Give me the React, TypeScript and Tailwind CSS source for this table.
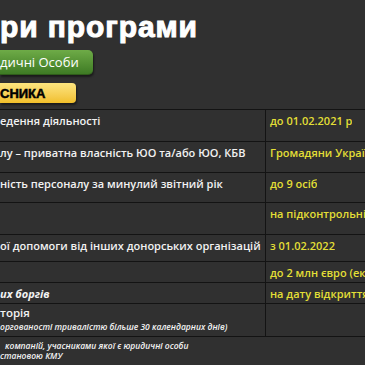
type Row = {
  h: string;
  left?: string;
  right?: string;
  italicLeft?: boolean;
};

const ROWS: Row[] = [
  { h: "h-[32px]", left: "едення діяльності", right: "до 01.02.2021 р" },
  { h: "h-[31px]", left: "лу – приватна власність ЮО та/або ЮО, КБВ", right: "Громадяни України" },
  { h: "h-[30px]", left: "ність персоналу за минулий звітний рік", right: "до 9 осіб" },
  { h: "h-[32px]", right: "на підконтрольній території" },
  { h: "h-[27px]", left: "ої допомоги від інших донорських організацій", right: "з 01.02.2022" },
  { h: "h-[21px]", right: "до 2 млн євро (еквівалент)" },
  { h: "h-[21px]", left: "их боргів", right: "на дату відкриття", italicLeft: true },
];

export default function App() {
  return (
    <div className="h-[365px] w-[365px] overflow-hidden bg-[#303030] font-['Open_Sans',sans-serif]">
      <h1 className="mt-[10px] whitespace-nowrap font-['Liberation_Sans',Arial,sans-serif] text-[30px] font-bold leading-[34px] tracking-[0.9px] text-white [-webkit-text-stroke:1px_white]">
        ри програми
      </h1>

      <div className="mt-[6px] flex h-[25px] w-[93px] items-center rounded-r-[5px] border-b border-[#2f5c1a] bg-gradient-to-b from-[#6eab47] to-[#3e7b24] shadow-[1px_2px_2px_rgba(0,0,0,0.45)]">
        <span className="whitespace-nowrap text-[13px] leading-none text-white">дичні Особи</span>
      </div>

      <div className="mt-[8px] flex h-[20px] w-[76px] items-center rounded-r-[4px] bg-gradient-to-b from-[#fde57e] to-[#f1bf28] shadow-[1px_2px_2px_rgba(0,0,0,0.45)]">
        <span className="whitespace-nowrap font-['Liberation_Sans',Arial,sans-serif] text-[13px] font-bold leading-none text-black [-webkit-text-stroke:0.5px_black]">
          СНИКА
        </span>
      </div>

      <div className="mt-[6px] text-[11px] font-semibold leading-[16px]">
        {ROWS.map((row, i) => (
          <div key={i} className={`flex border-t border-[#131313] ${row.h}`}>
            <div
              className={`w-[266px] shrink-0 overflow-hidden whitespace-nowrap border-r border-[#131313] pt-[3px] text-[#f2f2f2] ${
                row.italicLeft ? "italic font-bold" : ""
              }`}
            >
              {row.left}
            </div>
            <div className="overflow-hidden whitespace-nowrap pl-[4px] pt-[3px] text-[#e3df36]">
              {row.right}
            </div>
          </div>
        ))}

        <div className="flex h-[33px] border-t border-[#131313]">
          <div className="w-[266px] shrink-0 overflow-hidden whitespace-nowrap border-r border-[#131313] pt-[1px] text-[#f2f2f2]">
            <div className="text-[11.5px] leading-[15px]">торія</div>
            <div className="text-[8.5px] italic leading-[13px]">
              оргованості тривалістю більше 30 календарних днів)
            </div>
          </div>
          <div />
        </div>

        <div className="border-t border-[#131313] pt-[4px] text-[8.5px] italic leading-[10px] text-[#f2f2f2]">
          <div className="whitespace-nowrap pl-[5px]">компаній, учасниками якої є юридичні особи</div>
          <div className="whitespace-nowrap">становою КМУ</div>
        </div>
      </div>
    </div>
  );
}
